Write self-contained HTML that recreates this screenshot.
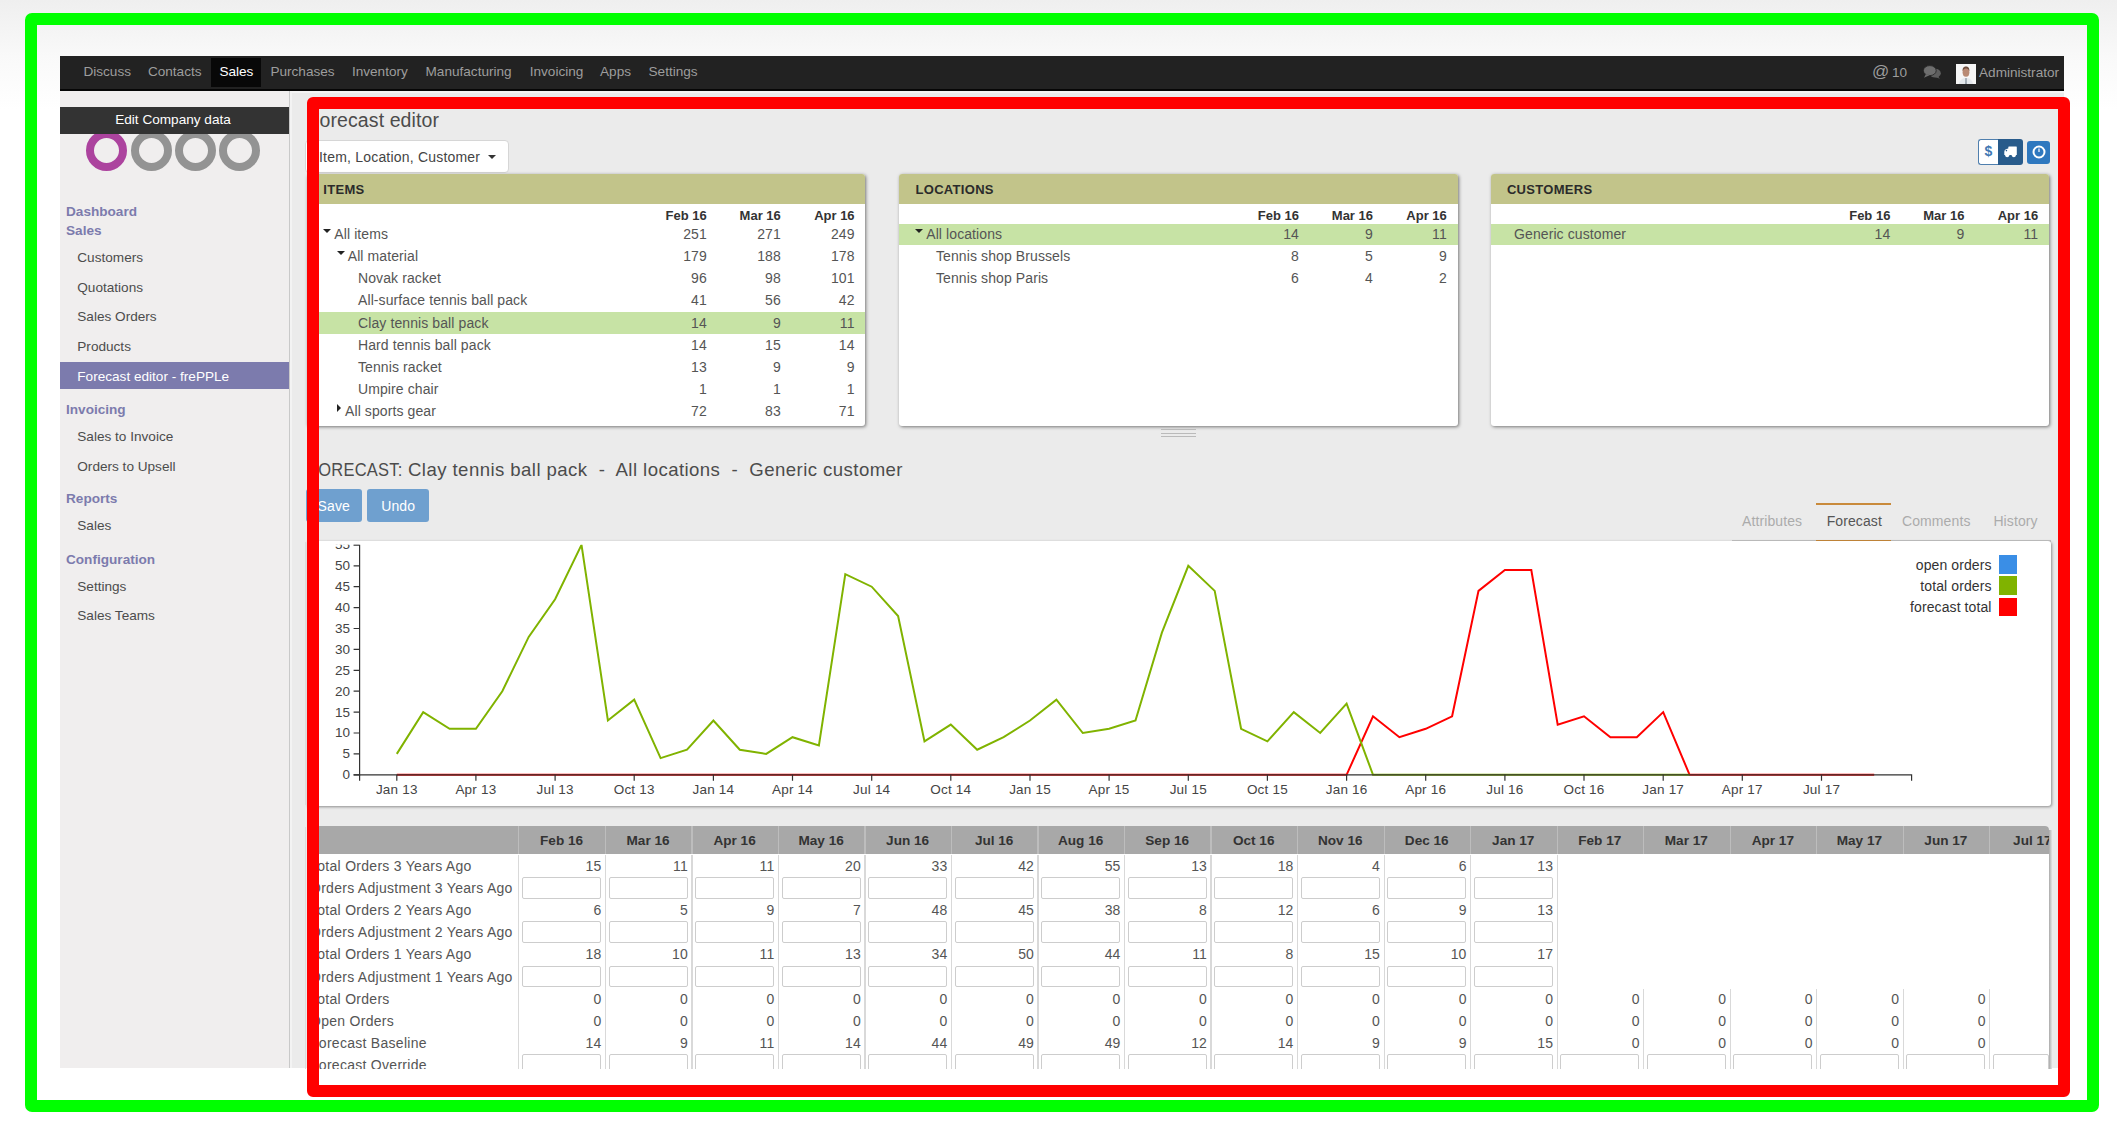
<!DOCTYPE html><html><head><meta charset='utf-8'><style>
*{margin:0;padding:0;box-sizing:border-box}
html,body{width:2117px;height:1128px;overflow:hidden}
body{position:relative;font-family:"Liberation Sans",sans-serif;background:linear-gradient(#efefef 0px,#f9f9f9 56px,#ffffff 110px,#ffffff 1128px)}
.a{position:absolute;white-space:pre}
.nav{font-size:13.6px;color:#9d9d9d;line-height:16px}
.sb{font-size:13.6px;color:#4c4c4c;line-height:16px}
.sh{font-size:13.6px;color:#7c7bad;font-weight:bold;line-height:16px}
.os{font-size:14px;letter-spacing:0.1px;color:#555;line-height:16px}
.ob{font-size:13px;font-weight:bold;color:#333;line-height:16px}
.num{text-align:right}
.panel{background:#fff;border-radius:3px;box-shadow:1px 1px 3.5px rgba(0,0,0,.5);overflow:hidden}
.ph{background:#c2c48a;height:29.3px}
.inp{position:absolute;border:1px solid #cdcdcd;background:#fff;border-radius:2px}
</style></head><body>
<div class="a" style="left:60px;top:56px;width:2004px;height:34.6px;background:#222;border-bottom:2px solid #060606"></div>
<div class="a" style="left:211px;top:58px;width:50px;height:29px;background:#080808"></div>
<div class="a nav" style="left:83.4px;top:64px;color:#9d9d9d">Discuss</div>
<div class="a nav" style="left:147.9px;top:64px;color:#9d9d9d">Contacts</div>
<div class="a nav" style="left:219.4px;top:64px;color:#fff">Sales</div>
<div class="a nav" style="left:270.4px;top:64px;color:#9d9d9d">Purchases</div>
<div class="a nav" style="left:351.9px;top:64px;color:#9d9d9d">Inventory</div>
<div class="a nav" style="left:425.5px;top:64px;color:#9d9d9d">Manufacturing</div>
<div class="a nav" style="left:529.7px;top:64px;color:#9d9d9d">Invoicing</div>
<div class="a nav" style="left:600px;top:64px;color:#9d9d9d">Apps</div>
<div class="a nav" style="left:648.5px;top:64px;color:#9d9d9d">Settings</div>
<div class="a nav" style="left:1872px;top:62.5px;font-size:17px;line-height:18px">@</div>
<div class="a nav" style="left:1892px;top:64.5px">10</div>
<div class="a nav" style="left:1979px;top:65px">Administrator</div>
<div class="a" style="left:1956px;top:64px;width:19.5px;height:19.8px;background:#f6f6f6"></div>
<svg class="a" style="left:1956px;top:64px" width="20" height="20" viewBox="0 0 20 20"><path d="M3 20 C4 15 7 14 10 14 C13 14 16 15 17 20 Z" fill="#e4e8ec"/><ellipse cx="10" cy="8.2" rx="3.4" ry="4.6" fill="#b98a74"/><path d="M6.6 7 C6.5 3.5 8 2.5 10 2.5 C12 2.5 13.5 3.5 13.4 7 C12.5 5 11 4.5 10 4.5 C9 4.5 7.5 5 6.6 7 Z" fill="#6f4e3e"/><path d="M9.3 14 L10.7 14 L11 20 L9 20 Z" fill="#9aa4ad"/></svg>
<svg class="a" style="left:1922.5px;top:64.5px" width="18" height="14" viewBox="0 0 18 14"><ellipse cx="12.2" cy="8.2" rx="5.6" ry="4.4" fill="#5f5f5f"/><path d="M14.5 11 L17 13.8 L12 12 Z" fill="#5f5f5f"/><ellipse cx="6.8" cy="5.6" rx="6.4" ry="5" fill="#6e6e6e" stroke="#222" stroke-width="0.8"/><path d="M3 9 L1 12.8 L6.5 10.2 Z" fill="#6e6e6e"/></svg>
<div class="a" style="left:60px;top:90.5px;width:230px;height:977.5px;background:#f0eeee;border-right:1px solid #c9c9c9"></div>
<div class="a" style="left:86.3px;top:129.9px;width:41px;height:41px;border-radius:50%;border:8px solid #ac439e"></div>
<div class="a" style="left:130.8px;top:129.9px;width:41px;height:41px;border-radius:50%;border:8px solid #939393"></div>
<div class="a" style="left:174.9px;top:129.9px;width:41px;height:41px;border-radius:50%;border:8px solid #939393"></div>
<div class="a" style="left:218.9px;top:129.9px;width:41px;height:41px;border-radius:50%;border:8px solid #939393"></div>
<div class="a" style="left:60px;top:106.8px;width:229px;height:27.2px;background:#333"></div>
<div class="a sb" style="left:58.5px;top:112px;width:229px;text-align:center;color:#fff">Edit Company data</div>
<div class="a" style="left:60px;top:362px;width:229px;height:27.2px;background:#7c7bad"></div>
<div class="a sh" style="left:66px;top:204px">Dashboard</div>
<div class="a sh" style="left:66px;top:223px">Sales</div>
<div class="a sb" style="left:77.3px;top:250.39999999999998px">Customers</div>
<div class="a sb" style="left:77.3px;top:280px">Quotations</div>
<div class="a sb" style="left:77.3px;top:309.4px">Sales Orders</div>
<div class="a sb" style="left:77.3px;top:339px">Products</div>
<div class="a sb" style="left:77.3px;top:368.5px;color:#fff">Forecast editor - frePPLe</div>
<div class="a sh" style="left:66px;top:401.5px">Invoicing</div>
<div class="a sb" style="left:77.3px;top:428.6px">Sales to Invoice</div>
<div class="a sb" style="left:77.3px;top:458.5px">Orders to Upsell</div>
<div class="a sh" style="left:66px;top:491px">Reports</div>
<div class="a sb" style="left:77.3px;top:518.4px">Sales</div>
<div class="a sh" style="left:66px;top:551.6px">Configuration</div>
<div class="a sb" style="left:77.3px;top:578.9px">Settings</div>
<div class="a sb" style="left:77.3px;top:608px">Sales Teams</div>
<div class="a" style="left:290px;top:90.5px;width:1774px;height:977.5px;background:#ebebeb;border-top:2.5px solid #f4f4f4"></div>
<div class="a" style="left:307.5px;top:109px;font-size:19.5px;color:#4c4c4c;line-height:22px;letter-spacing:0.1px">Forecast editor</div>
<div class="a" style="left:305px;top:139.5px;width:204px;height:33px;background:#fff;border:1px solid #d6d6d6;border-radius:4px"></div>
<div class="a os" style="left:319px;top:148.5px;color:#444;letter-spacing:0.2px">Item, Location, Customer</div>
<div class="a" style="left:487.7px;top:155px;width:0;height:0;border-left:4px solid transparent;border-right:4px solid transparent;border-top:4.5px solid #333"></div>
<div class="a" style="left:1978.4px;top:139.2px;width:20px;height:25.5px;background:#fff;border:1.5px solid #4f7fae;border-right:none;border-radius:3px 0 0 3px"></div>
<div class="a" style="left:1978.4px;top:141px;width:20px;text-align:center;font-size:14px;line-height:20px;color:#3f78b3;font-weight:bold">$</div>
<div class="a" style="left:1997.8px;top:139.2px;width:24.8px;height:25.5px;background:#285b8b;border-radius:0 3px 3px 0"></div>
<svg class="a" style="left:2004.4px;top:145.6px" width="13" height="12" viewBox="0 0 13 12"><path d="M0.3 9 V5.8 Q0.3 3.6 2.3 3 L4.3 2.6 V1.2 Q4.3 0.6 5 0.6 H12.3 Q12.8 0.6 12.8 1.2 V9 Z" fill="#fff"/><circle cx="3.2" cy="9.3" r="2" fill="#fff"/><circle cx="9.8" cy="9.3" r="2" fill="#fff"/><circle cx="2.4" cy="4.6" r="0.8" fill="#285b8b"/></svg>
<div class="a" style="left:2027px;top:140.6px;width:23px;height:23.2px;background:#2e78bf;border-radius:3px"></div>
<svg class="a" style="left:2030.5px;top:144.2px" width="16" height="16" viewBox="0 0 16 16"><circle cx="8" cy="8" r="5.5" fill="none" stroke="#fff" stroke-width="2"/><path d="M8 8 L8 4.5" stroke="#fff" stroke-width="1.2"/></svg>
<div class="a panel" style="left:307.1px;top:174.4px;width:558.3px;height:251.4px"><div class="ph"></div></div>
<div class="a ob" style="left:323.3px;top:182px;color:#2b2b2b;letter-spacing:0.3px">ITEMS</div>
<div class="a ob num" style="left:626.8px;top:207.5px;width:80px">Feb 16</div>
<div class="a ob num" style="left:700.8px;top:207.5px;width:80px">Mar 16</div>
<div class="a ob num" style="left:774.6px;top:207.5px;width:80px">Apr 16</div>
<div class="a" style="left:322.6px;top:228.5px;width:0;height:0;border-left:4px solid transparent;border-right:4px solid transparent;border-top:4.6px solid #222"></div>
<div class="a os" style="left:334.3px;top:226.0px">All items</div>
<div class="a os num" style="left:646.8px;top:226.0px;width:60px">251</div>
<div class="a os num" style="left:720.8px;top:226.0px;width:60px">271</div>
<div class="a os num" style="left:794.6px;top:226.0px;width:60px">249</div>
<div class="a" style="left:336.5px;top:250.65px;width:0;height:0;border-left:4px solid transparent;border-right:4px solid transparent;border-top:4.6px solid #222"></div>
<div class="a os" style="left:347.7px;top:248.15px">All material</div>
<div class="a os num" style="left:646.8px;top:248.15px;width:60px">179</div>
<div class="a os num" style="left:720.8px;top:248.15px;width:60px">188</div>
<div class="a os num" style="left:794.6px;top:248.15px;width:60px">178</div>
<div class="a os" style="left:358.0px;top:270.3px">Novak racket</div>
<div class="a os num" style="left:646.8px;top:270.3px;width:60px">96</div>
<div class="a os num" style="left:720.8px;top:270.3px;width:60px">98</div>
<div class="a os num" style="left:794.6px;top:270.3px;width:60px">101</div>
<div class="a os" style="left:358.0px;top:292.45px">All-surface tennis ball pack</div>
<div class="a os num" style="left:646.8px;top:292.45px;width:60px">41</div>
<div class="a os num" style="left:720.8px;top:292.45px;width:60px">56</div>
<div class="a os num" style="left:794.6px;top:292.45px;width:60px">42</div>
<div class="a" style="left:307.1px;top:312.40000000000003px;width:558.3px;height:21.6px;background:#c7e3a5"></div>
<div class="a os" style="left:358.0px;top:314.6px">Clay tennis ball pack</div>
<div class="a os num" style="left:646.8px;top:314.6px;width:60px">14</div>
<div class="a os num" style="left:720.8px;top:314.6px;width:60px">9</div>
<div class="a os num" style="left:794.6px;top:314.6px;width:60px">11</div>
<div class="a os" style="left:358.0px;top:336.75px">Hard tennis ball pack</div>
<div class="a os num" style="left:646.8px;top:336.75px;width:60px">14</div>
<div class="a os num" style="left:720.8px;top:336.75px;width:60px">15</div>
<div class="a os num" style="left:794.6px;top:336.75px;width:60px">14</div>
<div class="a os" style="left:358.0px;top:358.9px">Tennis racket</div>
<div class="a os num" style="left:646.8px;top:358.9px;width:60px">13</div>
<div class="a os num" style="left:720.8px;top:358.9px;width:60px">9</div>
<div class="a os num" style="left:794.6px;top:358.9px;width:60px">9</div>
<div class="a os" style="left:358.0px;top:381.04999999999995px">Umpire chair</div>
<div class="a os num" style="left:646.8px;top:381.04999999999995px;width:60px">1</div>
<div class="a os num" style="left:720.8px;top:381.04999999999995px;width:60px">1</div>
<div class="a os num" style="left:794.6px;top:381.04999999999995px;width:60px">1</div>
<div class="a" style="left:336.6px;top:403.7px;width:0;height:0;border-top:4px solid transparent;border-bottom:4px solid transparent;border-left:4.6px solid #222"></div>
<div class="a os" style="left:345.0px;top:403.2px">All sports gear</div>
<div class="a os num" style="left:646.8px;top:403.2px;width:60px">72</div>
<div class="a os num" style="left:720.8px;top:403.2px;width:60px">83</div>
<div class="a os num" style="left:794.6px;top:403.2px;width:60px">71</div>
<div class="a panel" style="left:899.3px;top:174.4px;width:558.3px;height:251.4px"><div class="ph"></div></div>
<div class="a ob" style="left:915.5px;top:182px;color:#2b2b2b;letter-spacing:0.3px">LOCATIONS</div>
<div class="a ob num" style="left:1219.0px;top:207.5px;width:80px">Feb 16</div>
<div class="a ob num" style="left:1293.0px;top:207.5px;width:80px">Mar 16</div>
<div class="a ob num" style="left:1366.8px;top:207.5px;width:80px">Apr 16</div>
<div class="a" style="left:899.3px;top:223.8px;width:558.3px;height:21.6px;background:#c7e3a5"></div>
<div class="a" style="left:915.4px;top:228.5px;width:0;height:0;border-left:4px solid transparent;border-right:4px solid transparent;border-top:4.6px solid #222"></div>
<div class="a os" style="left:926.2px;top:226.0px">All locations</div>
<div class="a os num" style="left:1239.0px;top:226.0px;width:60px">14</div>
<div class="a os num" style="left:1313.0px;top:226.0px;width:60px">9</div>
<div class="a os num" style="left:1386.8px;top:226.0px;width:60px">11</div>
<div class="a os" style="left:936.0px;top:248.15px">Tennis shop Brussels</div>
<div class="a os num" style="left:1239.0px;top:248.15px;width:60px">8</div>
<div class="a os num" style="left:1313.0px;top:248.15px;width:60px">5</div>
<div class="a os num" style="left:1386.8px;top:248.15px;width:60px">9</div>
<div class="a os" style="left:936.0px;top:270.3px">Tennis shop Paris</div>
<div class="a os num" style="left:1239.0px;top:270.3px;width:60px">6</div>
<div class="a os num" style="left:1313.0px;top:270.3px;width:60px">4</div>
<div class="a os num" style="left:1386.8px;top:270.3px;width:60px">2</div>
<div class="a panel" style="left:1490.7px;top:174.4px;width:558.3px;height:251.4px"><div class="ph"></div></div>
<div class="a ob" style="left:1506.9px;top:182px;color:#2b2b2b;letter-spacing:0.3px">CUSTOMERS</div>
<div class="a ob num" style="left:1810.4px;top:207.5px;width:80px">Feb 16</div>
<div class="a ob num" style="left:1884.4px;top:207.5px;width:80px">Mar 16</div>
<div class="a ob num" style="left:1958.2px;top:207.5px;width:80px">Apr 16</div>
<div class="a" style="left:1490.7px;top:223.8px;width:558.3px;height:21.6px;background:#c7e3a5"></div>
<div class="a os" style="left:1514.0px;top:226.0px">Generic customer</div>
<div class="a os num" style="left:1830.4px;top:226.0px;width:60px">14</div>
<div class="a os num" style="left:1904.4px;top:226.0px;width:60px">9</div>
<div class="a os num" style="left:1978.2px;top:226.0px;width:60px">11</div>
<div class="a" style="left:1160.6px;top:429px;width:35px;height:8px;border-top:1.4px solid #bababa;border-bottom:1.4px solid #bababa"></div>
<div class="a" style="left:1160.6px;top:432.5px;width:35px;height:1.4px;background:#bababa"></div>
<div class="a" style="left:308.2px;top:458.5px;font-size:18.6px;color:#4c4c4c;line-height:22px;letter-spacing:0.25px;transform:scaleX(0.886);transform-origin:0 0">FORECAST:</div>
<div class="a" style="left:408px;top:458.5px;font-size:18.6px;color:#4c4c4c;line-height:22px;letter-spacing:0.43px">Clay tennis ball pack  -  All locations  -  Generic customer</div>
<div class="a" style="left:305.5px;top:489.2px;width:56.5px;height:32.8px;background:#6fa0cf;border-radius:3px"></div>
<div class="a os" style="left:305.5px;top:498px;width:56.5px;text-align:center;color:#fff">Save</div>
<div class="a" style="left:367.4px;top:489.2px;width:61.5px;height:32.8px;background:#6fa0cf;border-radius:3px"></div>
<div class="a os" style="left:367.4px;top:498px;width:61.5px;text-align:center;color:#fff">Undo</div>
<div class="a" style="left:1731.5px;top:540px;width:319px;height:1.5px;background:#c4c4c4"></div>
<div class="a" style="left:1815.7px;top:503px;width:75.2px;height:2px;background:#c98a3b"></div>
<div class="a" style="left:1815.7px;top:539.5px;width:75.2px;height:2px;background:#c98a3b"></div>
<div class="a os" style="left:1742px;top:512.5px;color:#ababab">Attributes</div>
<div class="a os" style="left:1826.7px;top:512.5px;color:#555">Forecast</div>
<div class="a os" style="left:1902px;top:512.5px;color:#ababab">Comments</div>
<div class="a os" style="left:1993.4px;top:512.5px;color:#ababab">History</div>
<div class="a" style="left:307px;top:541.2px;width:1743.5px;height:264.4px;background:#fff;box-shadow:1px 1px 3px rgba(0,0,0,.4);border-radius:0 3px 3px 0"></div>
<svg class="a" style="left:0;top:0" width="2117" height="1128" viewBox="0 0 2117 1128"><defs><clipPath id="cc"><rect x="300" y="544.8" width="1760" height="270"/></clipPath></defs><g clip-path="url(#cc)"><path d="M396.8 774.8 L423.2 774.8 L449.6 774.8 L475.9 774.8 L502.3 774.8 L528.7 774.8 L555.1 774.8 L581.5 774.8 L607.9 774.8 L634.2 774.8 L660.6 774.8 L687.0 774.8 L713.4 774.8 L739.8 774.8 L766.2 774.8 L792.5 774.8 L818.9 774.8 L845.3 774.8 L871.7 774.8 L898.1 774.8 L924.5 774.8 L950.8 774.8 L977.2 774.8 L1003.6 774.8 L1030.0 774.8 L1056.4 774.8 L1082.8 774.8 L1109.1 774.8 L1135.5 774.8 L1161.9 774.8 L1188.3 774.8 L1214.7 774.8 L1241.1 774.8 L1267.4 774.8 L1293.8 774.8 L1320.2 774.8 L1346.6 774.8 L1373.0 716.3 L1399.4 737.2 L1425.7 728.8 L1452.1 716.3 L1478.5 590.9 L1504.9 570.0 L1531.3 570.0 L1557.7 724.6 L1584.0 716.3 L1610.4 737.2 L1636.8 737.2 L1663.2 712.1 L1689.6 774.8 L1715.9 774.8 L1742.3 774.8 L1768.7 774.8 L1795.1 774.8 L1821.5 774.8 L1847.9 774.8 L1874.2 774.8" fill="none" stroke="#ff0000" stroke-width="2"/><path d="M396.8 753.9 L423.2 712.1 L449.6 728.8 L475.9 728.8 L502.3 691.2 L528.7 636.9 L555.1 599.2 L581.5 544.9 L607.9 720.5 L634.2 699.6 L660.6 758.1 L687.0 749.7 L713.4 720.5 L739.8 749.7 L766.2 753.9 L792.5 737.2 L818.9 745.5 L845.3 574.2 L871.7 586.7 L898.1 616.0 L924.5 741.4 L950.8 724.6 L977.2 749.7 L1003.6 737.2 L1030.0 720.5 L1056.4 699.6 L1082.8 733.0 L1109.1 728.8 L1135.5 720.5 L1161.9 632.7 L1188.3 565.8 L1214.7 590.9 L1241.1 728.8 L1267.4 741.4 L1293.8 712.1 L1320.2 733.0 L1346.6 703.7 L1373.0 774.8 L1399.4 774.8 L1425.7 774.8 L1452.1 774.8 L1478.5 774.8 L1504.9 774.8 L1531.3 774.8 L1557.7 774.8 L1584.0 774.8 L1610.4 774.8 L1636.8 774.8 L1663.2 774.8 L1689.6 774.8" fill="none" stroke="#80b300" stroke-width="2"/><path d="M353.6 544.9 H359.6 V774.8 H353.6" fill="none" stroke="#333" stroke-width="1.2"/><path d="M353.6 774.8 H359.6" stroke="#333" stroke-width="1.2"/><text x="350" y="779.2" text-anchor="end" font-family="Liberation Sans" font-size="13.5" fill="#444">0</text><path d="M353.6 753.9 H359.6" stroke="#333" stroke-width="1.2"/><text x="350" y="758.3" text-anchor="end" font-family="Liberation Sans" font-size="13.5" fill="#444">5</text><path d="M353.6 733.0 H359.6" stroke="#333" stroke-width="1.2"/><text x="350" y="737.4" text-anchor="end" font-family="Liberation Sans" font-size="13.5" fill="#444">10</text><path d="M353.6 712.1 H359.6" stroke="#333" stroke-width="1.2"/><text x="350" y="716.5" text-anchor="end" font-family="Liberation Sans" font-size="13.5" fill="#444">15</text><path d="M353.6 691.2 H359.6" stroke="#333" stroke-width="1.2"/><text x="350" y="695.6" text-anchor="end" font-family="Liberation Sans" font-size="13.5" fill="#444">20</text><path d="M353.6 670.3 H359.6" stroke="#333" stroke-width="1.2"/><text x="350" y="674.7" text-anchor="end" font-family="Liberation Sans" font-size="13.5" fill="#444">25</text><path d="M353.6 649.4 H359.6" stroke="#333" stroke-width="1.2"/><text x="350" y="653.8" text-anchor="end" font-family="Liberation Sans" font-size="13.5" fill="#444">30</text><path d="M353.6 628.5 H359.6" stroke="#333" stroke-width="1.2"/><text x="350" y="632.9" text-anchor="end" font-family="Liberation Sans" font-size="13.5" fill="#444">35</text><path d="M353.6 607.6 H359.6" stroke="#333" stroke-width="1.2"/><text x="350" y="612.0" text-anchor="end" font-family="Liberation Sans" font-size="13.5" fill="#444">40</text><path d="M353.6 586.7 H359.6" stroke="#333" stroke-width="1.2"/><text x="350" y="591.1" text-anchor="end" font-family="Liberation Sans" font-size="13.5" fill="#444">45</text><path d="M353.6 565.8 H359.6" stroke="#333" stroke-width="1.2"/><text x="350" y="570.2" text-anchor="end" font-family="Liberation Sans" font-size="13.5" fill="#444">50</text><path d="M353.6 544.9 H359.6" stroke="#333" stroke-width="1.2"/><text x="350" y="549.3" text-anchor="end" font-family="Liberation Sans" font-size="13.5" fill="#444">55</text><path d="M359.6 780.8 V774.8 H1911.6 V780.8" fill="none" stroke="#333" stroke-width="1.2"/><path d="M396.8 774.8 V780.8" stroke="#333" stroke-width="1.2"/><text x="396.8" y="793.8" text-anchor="middle" font-family="Liberation Sans" font-size="13.5" letter-spacing="0.2" fill="#444">Jan 13</text><path d="M475.9 774.8 V780.8" stroke="#333" stroke-width="1.2"/><text x="475.9" y="793.8" text-anchor="middle" font-family="Liberation Sans" font-size="13.5" letter-spacing="0.2" fill="#444">Apr 13</text><path d="M555.1 774.8 V780.8" stroke="#333" stroke-width="1.2"/><text x="555.1" y="793.8" text-anchor="middle" font-family="Liberation Sans" font-size="13.5" letter-spacing="0.2" fill="#444">Jul 13</text><path d="M634.2 774.8 V780.8" stroke="#333" stroke-width="1.2"/><text x="634.2" y="793.8" text-anchor="middle" font-family="Liberation Sans" font-size="13.5" letter-spacing="0.2" fill="#444">Oct 13</text><path d="M713.4 774.8 V780.8" stroke="#333" stroke-width="1.2"/><text x="713.4" y="793.8" text-anchor="middle" font-family="Liberation Sans" font-size="13.5" letter-spacing="0.2" fill="#444">Jan 14</text><path d="M792.5 774.8 V780.8" stroke="#333" stroke-width="1.2"/><text x="792.5" y="793.8" text-anchor="middle" font-family="Liberation Sans" font-size="13.5" letter-spacing="0.2" fill="#444">Apr 14</text><path d="M871.7 774.8 V780.8" stroke="#333" stroke-width="1.2"/><text x="871.7" y="793.8" text-anchor="middle" font-family="Liberation Sans" font-size="13.5" letter-spacing="0.2" fill="#444">Jul 14</text><path d="M950.8 774.8 V780.8" stroke="#333" stroke-width="1.2"/><text x="950.8" y="793.8" text-anchor="middle" font-family="Liberation Sans" font-size="13.5" letter-spacing="0.2" fill="#444">Oct 14</text><path d="M1030.0 774.8 V780.8" stroke="#333" stroke-width="1.2"/><text x="1030.0" y="793.8" text-anchor="middle" font-family="Liberation Sans" font-size="13.5" letter-spacing="0.2" fill="#444">Jan 15</text><path d="M1109.1 774.8 V780.8" stroke="#333" stroke-width="1.2"/><text x="1109.1" y="793.8" text-anchor="middle" font-family="Liberation Sans" font-size="13.5" letter-spacing="0.2" fill="#444">Apr 15</text><path d="M1188.3 774.8 V780.8" stroke="#333" stroke-width="1.2"/><text x="1188.3" y="793.8" text-anchor="middle" font-family="Liberation Sans" font-size="13.5" letter-spacing="0.2" fill="#444">Jul 15</text><path d="M1267.4 774.8 V780.8" stroke="#333" stroke-width="1.2"/><text x="1267.4" y="793.8" text-anchor="middle" font-family="Liberation Sans" font-size="13.5" letter-spacing="0.2" fill="#444">Oct 15</text><path d="M1346.6 774.8 V780.8" stroke="#333" stroke-width="1.2"/><text x="1346.6" y="793.8" text-anchor="middle" font-family="Liberation Sans" font-size="13.5" letter-spacing="0.2" fill="#444">Jan 16</text><path d="M1425.7 774.8 V780.8" stroke="#333" stroke-width="1.2"/><text x="1425.7" y="793.8" text-anchor="middle" font-family="Liberation Sans" font-size="13.5" letter-spacing="0.2" fill="#444">Apr 16</text><path d="M1504.9 774.8 V780.8" stroke="#333" stroke-width="1.2"/><text x="1504.9" y="793.8" text-anchor="middle" font-family="Liberation Sans" font-size="13.5" letter-spacing="0.2" fill="#444">Jul 16</text><path d="M1584.0 774.8 V780.8" stroke="#333" stroke-width="1.2"/><text x="1584.0" y="793.8" text-anchor="middle" font-family="Liberation Sans" font-size="13.5" letter-spacing="0.2" fill="#444">Oct 16</text><path d="M1663.2 774.8 V780.8" stroke="#333" stroke-width="1.2"/><text x="1663.2" y="793.8" text-anchor="middle" font-family="Liberation Sans" font-size="13.5" letter-spacing="0.2" fill="#444">Jan 17</text><path d="M1742.3 774.8 V780.8" stroke="#333" stroke-width="1.2"/><text x="1742.3" y="793.8" text-anchor="middle" font-family="Liberation Sans" font-size="13.5" letter-spacing="0.2" fill="#444">Apr 17</text><path d="M1821.5 774.8 V780.8" stroke="#333" stroke-width="1.2"/><text x="1821.5" y="793.8" text-anchor="middle" font-family="Liberation Sans" font-size="13.5" letter-spacing="0.2" fill="#444">Jul 17</text></g></svg>
<div class="a" style="left:1998.6px;top:555.0px;width:18.7px;height:18.6px;background:#3a8ee6"></div>
<div class="a os num" style="left:1891.6px;top:556.5px;width:100px;color:#333">open orders</div>
<div class="a" style="left:1998.6px;top:576.3px;width:18.7px;height:18.6px;background:#80b300"></div>
<div class="a os num" style="left:1891.6px;top:577.8px;width:100px;color:#333">total orders</div>
<div class="a" style="left:1998.6px;top:597.6px;width:18.7px;height:18.6px;background:#ff0000"></div>
<div class="a os num" style="left:1891.6px;top:599.1px;width:100px;color:#333">forecast total</div>
<div class="a" style="left:307px;top:825.6px;width:1742.3px;height:243px;background:#fff;border-radius:0 4px 0 0;overflow:hidden">
<div style="position:absolute;left:0;top:0;width:100%;height:28.9px;background:#a8a8a8"></div></div>
<div class="a" style="left:518.3px;top:825.6px;width:1.2px;height:28.9px;background:#bdbdbd"></div>
<div class="a ob" style="left:518.3px;top:833px;width:86.52px;text-align:center;color:#333;font-size:13.6px">Feb 16</div>
<div class="a" style="left:604.8199999999999px;top:825.6px;width:1.2px;height:28.9px;background:#bdbdbd"></div>
<div class="a ob" style="left:604.8199999999999px;top:833px;width:86.52px;text-align:center;color:#333;font-size:13.6px">Mar 16</div>
<div class="a" style="left:691.3399999999999px;top:825.6px;width:1.2px;height:28.9px;background:#bdbdbd"></div>
<div class="a ob" style="left:691.3399999999999px;top:833px;width:86.52px;text-align:center;color:#333;font-size:13.6px">Apr 16</div>
<div class="a" style="left:777.8599999999999px;top:825.6px;width:1.2px;height:28.9px;background:#bdbdbd"></div>
<div class="a ob" style="left:777.8599999999999px;top:833px;width:86.52px;text-align:center;color:#333;font-size:13.6px">May 16</div>
<div class="a" style="left:864.3799999999999px;top:825.6px;width:1.2px;height:28.9px;background:#bdbdbd"></div>
<div class="a ob" style="left:864.3799999999999px;top:833px;width:86.52px;text-align:center;color:#333;font-size:13.6px">Jun 16</div>
<div class="a" style="left:950.8999999999999px;top:825.6px;width:1.2px;height:28.9px;background:#bdbdbd"></div>
<div class="a ob" style="left:950.8999999999999px;top:833px;width:86.52px;text-align:center;color:#333;font-size:13.6px">Jul 16</div>
<div class="a" style="left:1037.42px;top:825.6px;width:1.2px;height:28.9px;background:#bdbdbd"></div>
<div class="a ob" style="left:1037.42px;top:833px;width:86.52px;text-align:center;color:#333;font-size:13.6px">Aug 16</div>
<div class="a" style="left:1123.94px;top:825.6px;width:1.2px;height:28.9px;background:#bdbdbd"></div>
<div class="a ob" style="left:1123.94px;top:833px;width:86.52px;text-align:center;color:#333;font-size:13.6px">Sep 16</div>
<div class="a" style="left:1210.46px;top:825.6px;width:1.2px;height:28.9px;background:#bdbdbd"></div>
<div class="a ob" style="left:1210.46px;top:833px;width:86.52px;text-align:center;color:#333;font-size:13.6px">Oct 16</div>
<div class="a" style="left:1296.98px;top:825.6px;width:1.2px;height:28.9px;background:#bdbdbd"></div>
<div class="a ob" style="left:1296.98px;top:833px;width:86.52px;text-align:center;color:#333;font-size:13.6px">Nov 16</div>
<div class="a" style="left:1383.5px;top:825.6px;width:1.2px;height:28.9px;background:#bdbdbd"></div>
<div class="a ob" style="left:1383.5px;top:833px;width:86.52px;text-align:center;color:#333;font-size:13.6px">Dec 16</div>
<div class="a" style="left:1470.02px;top:825.6px;width:1.2px;height:28.9px;background:#bdbdbd"></div>
<div class="a ob" style="left:1470.02px;top:833px;width:86.52px;text-align:center;color:#333;font-size:13.6px">Jan 17</div>
<div class="a" style="left:1556.54px;top:825.6px;width:1.2px;height:28.9px;background:#bdbdbd"></div>
<div class="a ob" style="left:1556.54px;top:833px;width:86.52px;text-align:center;color:#333;font-size:13.6px">Feb 17</div>
<div class="a" style="left:1643.06px;top:825.6px;width:1.2px;height:28.9px;background:#bdbdbd"></div>
<div class="a ob" style="left:1643.06px;top:833px;width:86.52px;text-align:center;color:#333;font-size:13.6px">Mar 17</div>
<div class="a" style="left:1729.58px;top:825.6px;width:1.2px;height:28.9px;background:#bdbdbd"></div>
<div class="a ob" style="left:1729.58px;top:833px;width:86.52px;text-align:center;color:#333;font-size:13.6px">Apr 17</div>
<div class="a" style="left:1816.1px;top:825.6px;width:1.2px;height:28.9px;background:#bdbdbd"></div>
<div class="a ob" style="left:1816.1px;top:833px;width:86.52px;text-align:center;color:#333;font-size:13.6px">May 17</div>
<div class="a" style="left:1902.62px;top:825.6px;width:1.2px;height:28.9px;background:#bdbdbd"></div>
<div class="a ob" style="left:1902.62px;top:833px;width:86.52px;text-align:center;color:#333;font-size:13.6px">Jun 17</div>
<div class="a" style="left:1989.1399999999999px;top:825.6px;width:1.2px;height:28.9px;background:#bdbdbd"></div>
<div class="a ob" style="left:1989.1399999999999px;top:833px;width:86.52px;text-align:center;color:#333;font-size:13.6px">Jul 17</div>
<div class="a" style="left:518.3px;top:854.5px;width:1.2px;height:214px;background:#d9d9d9"></div>
<div class="a" style="left:604.8199999999999px;top:854.5px;width:1.2px;height:214px;background:#d9d9d9"></div>
<div class="a" style="left:691.3399999999999px;top:854.5px;width:1.2px;height:214px;background:#d9d9d9"></div>
<div class="a" style="left:777.8599999999999px;top:854.5px;width:1.2px;height:214px;background:#d9d9d9"></div>
<div class="a" style="left:864.3799999999999px;top:854.5px;width:1.2px;height:214px;background:#d9d9d9"></div>
<div class="a" style="left:950.8999999999999px;top:854.5px;width:1.2px;height:214px;background:#d9d9d9"></div>
<div class="a" style="left:1037.42px;top:854.5px;width:1.2px;height:214px;background:#d9d9d9"></div>
<div class="a" style="left:1123.94px;top:854.5px;width:1.2px;height:214px;background:#d9d9d9"></div>
<div class="a" style="left:1210.46px;top:854.5px;width:1.2px;height:214px;background:#d9d9d9"></div>
<div class="a" style="left:1296.98px;top:854.5px;width:1.2px;height:214px;background:#d9d9d9"></div>
<div class="a" style="left:1383.5px;top:854.5px;width:1.2px;height:214px;background:#d9d9d9"></div>
<div class="a" style="left:1470.02px;top:854.5px;width:1.2px;height:214px;background:#d9d9d9"></div>
<div class="a" style="left:1556.54px;top:854.5px;width:1.2px;height:214px;background:#d9d9d9"></div>
<div class="a" style="left:1643.06px;top:988.5px;width:1.2px;height:80px;background:#d9d9d9"></div>
<div class="a" style="left:1729.58px;top:988.5px;width:1.2px;height:80px;background:#d9d9d9"></div>
<div class="a" style="left:1816.1px;top:988.5px;width:1.2px;height:80px;background:#d9d9d9"></div>
<div class="a" style="left:1902.62px;top:988.5px;width:1.2px;height:80px;background:#d9d9d9"></div>
<div class="a" style="left:1989.1399999999999px;top:988.5px;width:1.2px;height:80px;background:#d9d9d9"></div>
<div class="a os" style="left:310px;top:858.0px;letter-spacing:0.28px">Total Orders 3 Years Ago</div>
<div class="a os num" style="left:518.3px;top:858.0px;width:83.02px">15</div>
<div class="a os num" style="left:604.8199999999999px;top:858.0px;width:83.02px">11</div>
<div class="a os num" style="left:691.3399999999999px;top:858.0px;width:83.02px">11</div>
<div class="a os num" style="left:777.8599999999999px;top:858.0px;width:83.02px">20</div>
<div class="a os num" style="left:864.3799999999999px;top:858.0px;width:83.02px">33</div>
<div class="a os num" style="left:950.8999999999999px;top:858.0px;width:83.02px">42</div>
<div class="a os num" style="left:1037.42px;top:858.0px;width:83.02px">55</div>
<div class="a os num" style="left:1123.94px;top:858.0px;width:83.02px">13</div>
<div class="a os num" style="left:1210.46px;top:858.0px;width:83.02px">18</div>
<div class="a os num" style="left:1296.98px;top:858.0px;width:83.02px">4</div>
<div class="a os num" style="left:1383.5px;top:858.0px;width:83.02px">6</div>
<div class="a os num" style="left:1470.02px;top:858.0px;width:83.02px">13</div>
<div class="a os" style="left:310px;top:880.1px;letter-spacing:0.28px">Orders Adjustment 3 Years Ago</div>
<div class="inp" style="left:522.0999999999999px;top:877.2px;width:79px;height:21.5px"></div>
<div class="inp" style="left:608.6199999999999px;top:877.2px;width:79px;height:21.5px"></div>
<div class="inp" style="left:695.1399999999999px;top:877.2px;width:79px;height:21.5px"></div>
<div class="inp" style="left:781.6599999999999px;top:877.2px;width:79px;height:21.5px"></div>
<div class="inp" style="left:868.1799999999998px;top:877.2px;width:79px;height:21.5px"></div>
<div class="inp" style="left:954.6999999999998px;top:877.2px;width:79px;height:21.5px"></div>
<div class="inp" style="left:1041.22px;top:877.2px;width:79px;height:21.5px"></div>
<div class="inp" style="left:1127.74px;top:877.2px;width:79px;height:21.5px"></div>
<div class="inp" style="left:1214.26px;top:877.2px;width:79px;height:21.5px"></div>
<div class="inp" style="left:1300.78px;top:877.2px;width:79px;height:21.5px"></div>
<div class="inp" style="left:1387.3px;top:877.2px;width:79px;height:21.5px"></div>
<div class="inp" style="left:1473.82px;top:877.2px;width:79px;height:21.5px"></div>
<div class="a os" style="left:310px;top:902.2px;letter-spacing:0.28px">Total Orders 2 Years Ago</div>
<div class="a os num" style="left:518.3px;top:902.2px;width:83.02px">6</div>
<div class="a os num" style="left:604.8199999999999px;top:902.2px;width:83.02px">5</div>
<div class="a os num" style="left:691.3399999999999px;top:902.2px;width:83.02px">9</div>
<div class="a os num" style="left:777.8599999999999px;top:902.2px;width:83.02px">7</div>
<div class="a os num" style="left:864.3799999999999px;top:902.2px;width:83.02px">48</div>
<div class="a os num" style="left:950.8999999999999px;top:902.2px;width:83.02px">45</div>
<div class="a os num" style="left:1037.42px;top:902.2px;width:83.02px">38</div>
<div class="a os num" style="left:1123.94px;top:902.2px;width:83.02px">8</div>
<div class="a os num" style="left:1210.46px;top:902.2px;width:83.02px">12</div>
<div class="a os num" style="left:1296.98px;top:902.2px;width:83.02px">6</div>
<div class="a os num" style="left:1383.5px;top:902.2px;width:83.02px">9</div>
<div class="a os num" style="left:1470.02px;top:902.2px;width:83.02px">13</div>
<div class="a os" style="left:310px;top:924.3px;letter-spacing:0.28px">Orders Adjustment 2 Years Ago</div>
<div class="inp" style="left:522.0999999999999px;top:921.4px;width:79px;height:21.5px"></div>
<div class="inp" style="left:608.6199999999999px;top:921.4px;width:79px;height:21.5px"></div>
<div class="inp" style="left:695.1399999999999px;top:921.4px;width:79px;height:21.5px"></div>
<div class="inp" style="left:781.6599999999999px;top:921.4px;width:79px;height:21.5px"></div>
<div class="inp" style="left:868.1799999999998px;top:921.4px;width:79px;height:21.5px"></div>
<div class="inp" style="left:954.6999999999998px;top:921.4px;width:79px;height:21.5px"></div>
<div class="inp" style="left:1041.22px;top:921.4px;width:79px;height:21.5px"></div>
<div class="inp" style="left:1127.74px;top:921.4px;width:79px;height:21.5px"></div>
<div class="inp" style="left:1214.26px;top:921.4px;width:79px;height:21.5px"></div>
<div class="inp" style="left:1300.78px;top:921.4px;width:79px;height:21.5px"></div>
<div class="inp" style="left:1387.3px;top:921.4px;width:79px;height:21.5px"></div>
<div class="inp" style="left:1473.82px;top:921.4px;width:79px;height:21.5px"></div>
<div class="a os" style="left:310px;top:946.4px;letter-spacing:0.28px">Total Orders 1 Years Ago</div>
<div class="a os num" style="left:518.3px;top:946.4px;width:83.02px">18</div>
<div class="a os num" style="left:604.8199999999999px;top:946.4px;width:83.02px">10</div>
<div class="a os num" style="left:691.3399999999999px;top:946.4px;width:83.02px">11</div>
<div class="a os num" style="left:777.8599999999999px;top:946.4px;width:83.02px">13</div>
<div class="a os num" style="left:864.3799999999999px;top:946.4px;width:83.02px">34</div>
<div class="a os num" style="left:950.8999999999999px;top:946.4px;width:83.02px">50</div>
<div class="a os num" style="left:1037.42px;top:946.4px;width:83.02px">44</div>
<div class="a os num" style="left:1123.94px;top:946.4px;width:83.02px">11</div>
<div class="a os num" style="left:1210.46px;top:946.4px;width:83.02px">8</div>
<div class="a os num" style="left:1296.98px;top:946.4px;width:83.02px">15</div>
<div class="a os num" style="left:1383.5px;top:946.4px;width:83.02px">10</div>
<div class="a os num" style="left:1470.02px;top:946.4px;width:83.02px">17</div>
<div class="a os" style="left:310px;top:968.5px;letter-spacing:0.28px">Orders Adjustment 1 Years Ago</div>
<div class="inp" style="left:522.0999999999999px;top:965.6px;width:79px;height:21.5px"></div>
<div class="inp" style="left:608.6199999999999px;top:965.6px;width:79px;height:21.5px"></div>
<div class="inp" style="left:695.1399999999999px;top:965.6px;width:79px;height:21.5px"></div>
<div class="inp" style="left:781.6599999999999px;top:965.6px;width:79px;height:21.5px"></div>
<div class="inp" style="left:868.1799999999998px;top:965.6px;width:79px;height:21.5px"></div>
<div class="inp" style="left:954.6999999999998px;top:965.6px;width:79px;height:21.5px"></div>
<div class="inp" style="left:1041.22px;top:965.6px;width:79px;height:21.5px"></div>
<div class="inp" style="left:1127.74px;top:965.6px;width:79px;height:21.5px"></div>
<div class="inp" style="left:1214.26px;top:965.6px;width:79px;height:21.5px"></div>
<div class="inp" style="left:1300.78px;top:965.6px;width:79px;height:21.5px"></div>
<div class="inp" style="left:1387.3px;top:965.6px;width:79px;height:21.5px"></div>
<div class="inp" style="left:1473.82px;top:965.6px;width:79px;height:21.5px"></div>
<div class="a os" style="left:310px;top:990.6px;letter-spacing:0.28px">Total Orders</div>
<div class="a os num" style="left:518.3px;top:990.6px;width:83.02px">0</div>
<div class="a os num" style="left:604.8199999999999px;top:990.6px;width:83.02px">0</div>
<div class="a os num" style="left:691.3399999999999px;top:990.6px;width:83.02px">0</div>
<div class="a os num" style="left:777.8599999999999px;top:990.6px;width:83.02px">0</div>
<div class="a os num" style="left:864.3799999999999px;top:990.6px;width:83.02px">0</div>
<div class="a os num" style="left:950.8999999999999px;top:990.6px;width:83.02px">0</div>
<div class="a os num" style="left:1037.42px;top:990.6px;width:83.02px">0</div>
<div class="a os num" style="left:1123.94px;top:990.6px;width:83.02px">0</div>
<div class="a os num" style="left:1210.46px;top:990.6px;width:83.02px">0</div>
<div class="a os num" style="left:1296.98px;top:990.6px;width:83.02px">0</div>
<div class="a os num" style="left:1383.5px;top:990.6px;width:83.02px">0</div>
<div class="a os num" style="left:1470.02px;top:990.6px;width:83.02px">0</div>
<div class="a os num" style="left:1556.54px;top:990.6px;width:83.02px">0</div>
<div class="a os num" style="left:1643.06px;top:990.6px;width:83.02px">0</div>
<div class="a os num" style="left:1729.58px;top:990.6px;width:83.02px">0</div>
<div class="a os num" style="left:1816.1px;top:990.6px;width:83.02px">0</div>
<div class="a os num" style="left:1902.62px;top:990.6px;width:83.02px">0</div>
<div class="a os" style="left:310px;top:1012.7px;letter-spacing:0.28px">Open Orders</div>
<div class="a os num" style="left:518.3px;top:1012.7px;width:83.02px">0</div>
<div class="a os num" style="left:604.8199999999999px;top:1012.7px;width:83.02px">0</div>
<div class="a os num" style="left:691.3399999999999px;top:1012.7px;width:83.02px">0</div>
<div class="a os num" style="left:777.8599999999999px;top:1012.7px;width:83.02px">0</div>
<div class="a os num" style="left:864.3799999999999px;top:1012.7px;width:83.02px">0</div>
<div class="a os num" style="left:950.8999999999999px;top:1012.7px;width:83.02px">0</div>
<div class="a os num" style="left:1037.42px;top:1012.7px;width:83.02px">0</div>
<div class="a os num" style="left:1123.94px;top:1012.7px;width:83.02px">0</div>
<div class="a os num" style="left:1210.46px;top:1012.7px;width:83.02px">0</div>
<div class="a os num" style="left:1296.98px;top:1012.7px;width:83.02px">0</div>
<div class="a os num" style="left:1383.5px;top:1012.7px;width:83.02px">0</div>
<div class="a os num" style="left:1470.02px;top:1012.7px;width:83.02px">0</div>
<div class="a os num" style="left:1556.54px;top:1012.7px;width:83.02px">0</div>
<div class="a os num" style="left:1643.06px;top:1012.7px;width:83.02px">0</div>
<div class="a os num" style="left:1729.58px;top:1012.7px;width:83.02px">0</div>
<div class="a os num" style="left:1816.1px;top:1012.7px;width:83.02px">0</div>
<div class="a os num" style="left:1902.62px;top:1012.7px;width:83.02px">0</div>
<div class="a os" style="left:310px;top:1034.8px;letter-spacing:0.28px">Forecast Baseline</div>
<div class="a os num" style="left:518.3px;top:1034.8px;width:83.02px">14</div>
<div class="a os num" style="left:604.8199999999999px;top:1034.8px;width:83.02px">9</div>
<div class="a os num" style="left:691.3399999999999px;top:1034.8px;width:83.02px">11</div>
<div class="a os num" style="left:777.8599999999999px;top:1034.8px;width:83.02px">14</div>
<div class="a os num" style="left:864.3799999999999px;top:1034.8px;width:83.02px">44</div>
<div class="a os num" style="left:950.8999999999999px;top:1034.8px;width:83.02px">49</div>
<div class="a os num" style="left:1037.42px;top:1034.8px;width:83.02px">49</div>
<div class="a os num" style="left:1123.94px;top:1034.8px;width:83.02px">12</div>
<div class="a os num" style="left:1210.46px;top:1034.8px;width:83.02px">14</div>
<div class="a os num" style="left:1296.98px;top:1034.8px;width:83.02px">9</div>
<div class="a os num" style="left:1383.5px;top:1034.8px;width:83.02px">9</div>
<div class="a os num" style="left:1470.02px;top:1034.8px;width:83.02px">15</div>
<div class="a os num" style="left:1556.54px;top:1034.8px;width:83.02px">0</div>
<div class="a os num" style="left:1643.06px;top:1034.8px;width:83.02px">0</div>
<div class="a os num" style="left:1729.58px;top:1034.8px;width:83.02px">0</div>
<div class="a os num" style="left:1816.1px;top:1034.8px;width:83.02px">0</div>
<div class="a os num" style="left:1902.62px;top:1034.8px;width:83.02px">0</div>
<div class="a os" style="left:310px;top:1056.9px;letter-spacing:0.28px">Forecast Override</div>
<div class="inp" style="left:522.0999999999999px;top:1054.0px;width:79px;height:21.5px"></div>
<div class="inp" style="left:608.6199999999999px;top:1054.0px;width:79px;height:21.5px"></div>
<div class="inp" style="left:695.1399999999999px;top:1054.0px;width:79px;height:21.5px"></div>
<div class="inp" style="left:781.6599999999999px;top:1054.0px;width:79px;height:21.5px"></div>
<div class="inp" style="left:868.1799999999998px;top:1054.0px;width:79px;height:21.5px"></div>
<div class="inp" style="left:954.6999999999998px;top:1054.0px;width:79px;height:21.5px"></div>
<div class="inp" style="left:1041.22px;top:1054.0px;width:79px;height:21.5px"></div>
<div class="inp" style="left:1127.74px;top:1054.0px;width:79px;height:21.5px"></div>
<div class="inp" style="left:1214.26px;top:1054.0px;width:79px;height:21.5px"></div>
<div class="inp" style="left:1300.78px;top:1054.0px;width:79px;height:21.5px"></div>
<div class="inp" style="left:1387.3px;top:1054.0px;width:79px;height:21.5px"></div>
<div class="inp" style="left:1473.82px;top:1054.0px;width:79px;height:21.5px"></div>
<div class="inp" style="left:1560.34px;top:1054.0px;width:79px;height:21.5px"></div>
<div class="inp" style="left:1646.86px;top:1054.0px;width:79px;height:21.5px"></div>
<div class="inp" style="left:1733.3799999999999px;top:1054.0px;width:79px;height:21.5px"></div>
<div class="inp" style="left:1819.8999999999999px;top:1054.0px;width:79px;height:21.5px"></div>
<div class="inp" style="left:1906.4199999999998px;top:1054.0px;width:79px;height:21.5px"></div>
<div class="inp" style="left:1992.9399999999998px;top:1054.0px;width:56.360000000000355px;height:21.5px"></div>
<div class="a" style="left:60px;top:1068.5px;width:2010px;height:40px;background:#fff"></div>
<div class="a" style="left:2049.3px;top:830px;width:3px;height:238.5px;background:linear-gradient(90deg,#a9a9a9,#e3e3e3)"></div>
<div class="a" style="left:290px;top:92px;width:1.6px;height:976px;background:#f3f3f3"></div>
<div class="a" style="left:304.5px;top:542px;width:1.5px;height:263px;background:#dcdcdc"></div>
<div class="a" style="left:304.5px;top:827px;width:1.5px;height:241.5px;background:#dcdcdc"></div>
<div class="a" style="left:25px;top:13px;width:2074px;height:1099px;border:12px solid #00ff00;border-radius:7px"></div>
<div class="a" style="left:307px;top:97px;width:1763px;height:1000px;border:12px solid #ff0000;border-radius:6px"></div>

</body></html>
